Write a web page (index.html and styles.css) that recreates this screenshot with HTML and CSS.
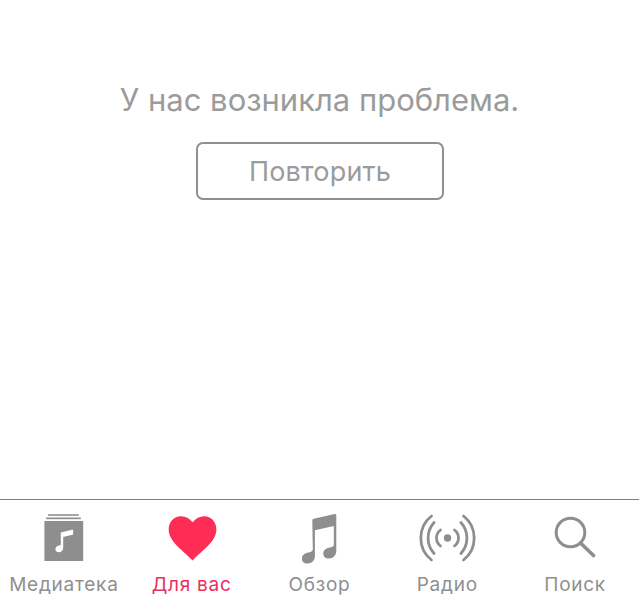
FILE: index.html
```html
<!DOCTYPE html>
<html lang="ru">
<head>
    <meta charset="UTF-8">
    <meta name="viewport" content="width=device-width, initial-scale=1.0">
    <title>Для вас</title>
    <link rel="stylesheet" href="styles.css">
</head>
<body>
    <main class="content">
        <h1 class="message">У нас возникла проблема.</h1>
        <button class="retry">Повторить</button>
    </main>
    <nav class="tabbar">
        <a class="tab">
            <svg class="icon" viewBox="0 0 60 52" width="60" height="52">
                <rect x="14.100" y="1.200" width="30.700" height="1.600" fill="#8e8e8e"/>
                <rect x="12.100" y="4.500" width="34.700" height="1.700" fill="#8e8e8e"/>
                <rect x="10.400" y="8" width="38.800" height="40" fill="#8e8e8e"/>
                <path fill="#fff" d="M26.800 19.500L38 16.700q1.200-.3 1.200 1v3q0 .8-.8 1L29.200 24v11c0 2.600-2 4.300-4.300 4.300-2.100 0-3.500-1.200-3.500-3 0-2.200 1.700-3.400 3.500-3.800l1.900-.5z"/>
            </svg>
            <span>Медиатека</span>
        </a>
        <a class="tab active">
            <svg class="icon" viewBox="0 0 60 52" width="60" height="52">
                <path fill="#ff2d55" d="M30.600 9.300C27.500 5.300 23.500 3.300 19 3.300 11.800 3.300 6.700 9 6.700 16.500 6.700 28.500 20 36.500 30.600 47.500 41 36.500 54.400 28.500 54.400 16.500 54.400 9 49.300 3.300 42.200 3.300 37.700 3.300 33.700 5.300 30.600 9.300z"/>
            </svg>
            <span>Для вас</span>
        </a>
        <a class="tab">
            <svg class="icon" viewBox="0 0 60 52" width="60" height="52">
                <path fill="#8e8e8e" d="M23.300 7.500q0-1.500 1.500-1.800L45.500 1q1.800-.4 1.800 1.500V38c0 4-3 7.500-7.500 7.500-3.500 0-5.500-2-5.500-5 0-3.500 2.500-5 5.500-5.800l3-.7q2-.5 2-2.500V13L25.900 17.200V43c0 4.500-3 7.500-7.500 7.500-3.500 0-5.500-2-5.500-5 0-3.500 2.500-5 5.500-5.800l3-.7q2.400-.6 2.400-2.500z"/>
            </svg>
            <span>Обзор</span>
        </a>
        <a class="tab">
            <svg class="icon" viewBox="0 0 60 52" width="60" height="52" fill="none" stroke="#8e8e8e" stroke-width="2.800" stroke-linecap="round">
                <circle cx="30.500" cy="25" r="3.700" fill="#8e8e8e" stroke="none"/>
                <path d="M23.500 17A10 10 0 0 0 23.500 33M37.500 17A10 10 0 0 1 37.500 33"/>
                <path d="M17.100 9.500A23 23 0 0 0 17.100 40.500M43.900 9.500A23 23 0 0 1 43.900 40.500"/>
                <path d="M14.500 3A28 28 0 0 0 14.500 47M46.500 3A28 28 0 0 1 46.500 47"/>
            </svg>
            <span>Радио</span>
        </a>
        <a class="tab">
            <svg class="icon" viewBox="0 0 60 52" width="60" height="52" fill="none" stroke="#8e8e8e" stroke-linecap="round">
                <circle cx="25.500" cy="19.500" r="14.300" stroke-width="3"/>
                <path d="M35.500 30L48.500 42.500" stroke-width="3.600"/>
            </svg>
            <span>Поиск</span>
        </a>
    </nav>
</body>
</html>
```

FILE: styles.css
```css
html, body {
    height: 100%;
}
body {
    margin: 0;
    display: flex;
    flex-direction: column;
    min-height: 100vh;
    overflow: hidden;
    font-family: Inter, Roboto, "Noto Sans", sans-serif;
    background-color: #fff;
    color: #9b9b9b;
}
.content {
    flex: 1;
    display: flex;
    flex-direction: column;
    align-items: center;
    padding-top: 81px;
}
.message {
    margin: 0;
    font-size: 31px;
    line-height: 38px;
    font-weight: 400;
    white-space: nowrap;
}
.retry {
    margin-top: 23px;
    width: 248px;
    height: 58px;
    padding: 0 0 0 1px;
    background: #fff;
    border: 2px solid #8f8f8f;
    border-radius: 7px;
    color: #9b9b9b;
    font-family: inherit;
    font-size: 27px;
    letter-spacing: .2px;
}
.tabbar {
    display: grid;
    grid-template-columns: repeat(5, 1fr);
    height: 97px;
    border-top: 1px solid #7d7d7d;
}
.tab {
    display: flex;
    flex-direction: column;
    align-items: center;
    padding-top: 13px;
    color: #8f8f8f;
    font-size: 19px;
    line-height: 24px;
    letter-spacing: .75px;
}
.tab span {
    margin-top: 8px;
    white-space: nowrap;
}
.tab.active {
    color: #e8305f;
}
.icon {
    display: block;
}
```
